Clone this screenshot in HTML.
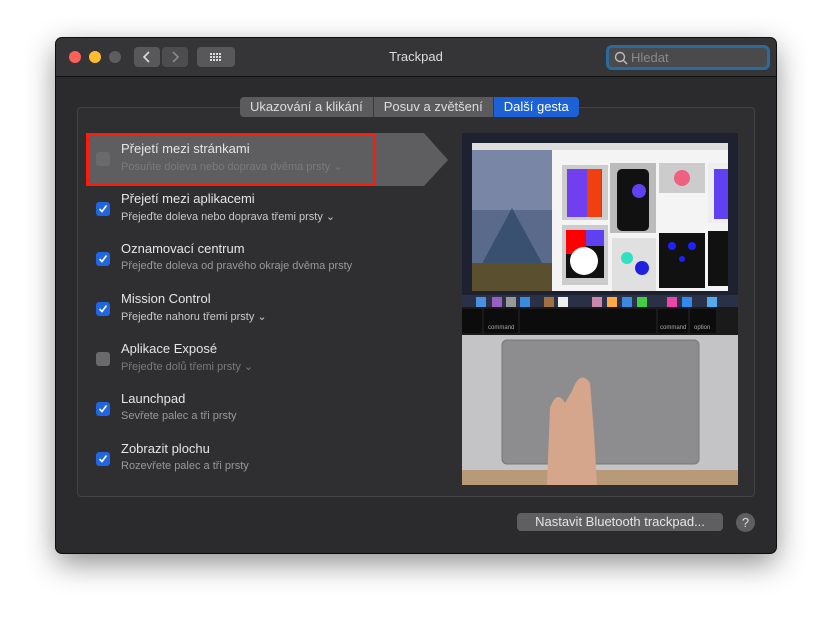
<!DOCTYPE html>
<html><head><meta charset="utf-8"><style>
*{margin:0;padding:0;box-sizing:border-box}
body{width:832px;height:627px;background:#fff;font-family:"Liberation Sans",sans-serif;position:relative;overflow:hidden}
.win{position:absolute;left:56px;top:38px;width:720px;height:515px;background:#2b2b2d;border-radius:6px;box-shadow:0 10px 30px rgba(0,0,0,.45),0 0 0 1px #111;overflow:hidden}
.tb{position:absolute;left:0;top:0;width:720px;height:39px;background:#353537;border-bottom:1px solid #111}
.dot{position:absolute;top:13px;width:12px;height:12px;border-radius:50%}
.btn{position:absolute;top:9px;height:20px;background:#58585a;border-radius:4px}
.title{position:absolute;left:0;width:720px;top:11px;text-align:center;color:#ddd;font-size:13px}
.search{position:absolute;left:550px;top:7px;width:164px;height:25px;border:3px solid #2a6a9e;border-radius:6px;background:#4a4a4c;color:#8a8a8a;font-size:13px;padding:2px 0 0 22px}
.panel{position:absolute;left:21px;top:69px;width:678px;height:390px;border:1px solid #444;border-radius:4px;background:#2f2f31}
.tabs{position:absolute;left:184px;top:59px;height:20px;display:flex;border-radius:4px;overflow:hidden;font-size:13px;color:#ddd}
.tabs div{background:#5b5b5d;padding:2px 10px 0;height:20px;border-right:1px solid #3a3a3c}
.tabs .a{background:#1c62d6;color:#fff;border:0}
.row{position:absolute;left:40px;width:320px;height:50px}
.cb{position:absolute;left:0;top:19px;width:14px;height:14px;border-radius:3px;background:#1f66e0}
.cb svg{position:absolute;left:2px;top:2px}
.cb.off{background:#6a6a6c}
.t{position:absolute;left:25px;top:8px;color:#e6e6e6;font-size:13px}
.s{position:absolute;left:25px;top:27px;color:#c8c8c8;font-size:11px}
.row.dim .s{color:#7a7a7a}
</style></head><body>
<div class="win">
 <div class="tb">
  <div class="dot" style="left:13px;background:#fe5f57"></div>
  <div class="dot" style="left:33px;background:#febc2e"></div>
  <div class="dot" style="left:53px;background:#5d5d5f"></div>
  <div class="btn" style="left:78px;width:26px"><svg width="26" height="20"><path d="M15 5l-5 5 5 5" stroke="#ddd" stroke-width="1.6" fill="none"/></svg></div>
  <div class="btn" style="left:106px;width:26px;background:#4d4d4f"><svg width="26" height="20"><path d="M11 5l5 5-5 5" stroke="#888" stroke-width="1.6" fill="none"/></svg></div>
  <div class="btn" style="left:141px;width:38px"><svg width="38" height="20"><g fill="#ddd"><rect x="13" y="6" width="2" height="2"/><rect x="16" y="6" width="2" height="2"/><rect x="19" y="6" width="2" height="2"/><rect x="22" y="6" width="2" height="2"/><rect x="13" y="9" width="2" height="2"/><rect x="16" y="9" width="2" height="2"/><rect x="19" y="9" width="2" height="2"/><rect x="22" y="9" width="2" height="2"/><rect x="13" y="12" width="2" height="2"/><rect x="16" y="12" width="2" height="2"/><rect x="19" y="12" width="2" height="2"/><rect x="22" y="12" width="2" height="2"/></g></svg></div>
  <div class="title">Trackpad</div>
  <div class="search"><svg style="position:absolute;left:5px;top:3px" width="14" height="14"><circle cx="6" cy="6" r="4.5" stroke="#bbb" stroke-width="1.4" fill="none"/><path d="M9 9l4 4" stroke="#bbb" stroke-width="1.5"/></svg>Hledat</div>
 </div>
 <div class="panel"></div>
 <div class="tabs"><div>Ukazování a klikání</div><div>Posuv a zvětšení</div><div class="a">Další gesta</div></div>
 <svg style="position:absolute;left:30px;top:95px" width="400" height="54"><path d="M0 0H338L362 27 338 53H0Z" fill="#5e5e60"/><rect x="1.5" y="1.5" width="287" height="50" fill="none" stroke="#ff1a0a" stroke-width="3"/></svg>
 <div class="row dim" style="top:95px"><div class="cb off"></div><div class="t">Přejetí mezi stránkami</div><div class="s">Posuňte doleva nebo doprava dvěma prsty ⌄</div></div>
 <div class="row" style="top:145px"><div class="cb"><svg width="10" height="10"><path d="M1.5 5l2.5 2.5 4.5-6" stroke="#fff" stroke-width="1.6" fill="none"/></svg></div><div class="t">Přejetí mezi aplikacemi</div><div class="s">Přejeďte doleva nebo doprava třemi prsty ⌄</div></div>
 <div class="row" style="top:195px"><div class="cb"><svg width="10" height="10"><path d="M1.5 5l2.5 2.5 4.5-6" stroke="#fff" stroke-width="1.6" fill="none"/></svg></div><div class="t">Oznamovací centrum</div><div class="s" style="color:#999">Přejeďte doleva od pravého okraje dvěma prsty</div></div>
 <div class="row" style="top:245px"><div class="cb"><svg width="10" height="10"><path d="M1.5 5l2.5 2.5 4.5-6" stroke="#fff" stroke-width="1.6" fill="none"/></svg></div><div class="t">Mission Control</div><div class="s">Přejeďte nahoru třemi prsty ⌄</div></div>
 <div class="row dim" style="top:295px"><div class="cb off"></div><div class="t">Aplikace Exposé</div><div class="s">Přejeďte dolů třemi prsty ⌄</div></div>
 <div class="row" style="top:345px"><div class="cb"><svg width="10" height="10"><path d="M1.5 5l2.5 2.5 4.5-6" stroke="#fff" stroke-width="1.6" fill="none"/></svg></div><div class="t">Launchpad</div><div class="s" style="color:#999">Sevřete palec a tři prsty</div></div>
 <div class="row" style="top:395px"><div class="cb"><svg width="10" height="10"><path d="M1.5 5l2.5 2.5 4.5-6" stroke="#fff" stroke-width="1.6" fill="none"/></svg></div><div class="t">Zobrazit plochu</div><div class="s" style="color:#999">Rozevřete palec a tři prsty</div></div>
 <svg style="position:absolute;left:406px;top:95px" width="276" height="352">
  <rect width="276" height="352" fill="#bdbdbf"/>
  <rect width="276" height="172" fill="#1e2230"/>
  <rect x="10" y="10" width="256" height="148" fill="#ddd"/>
  <rect x="10" y="17" width="80" height="141" fill="#5a6a8a"/>
  <rect x="10" y="17" width="80" height="60" fill="#7a86a6"/>
  <path d="M15 140L50 75 80 130Z" fill="#3a5070"/>
  <rect x="10" y="130" width="80" height="28" fill="#5a5030"/>
  <rect x="90" y="17" width="176" height="141" fill="#f4f4f4"/>
  <rect x="100" y="32" width="46" height="55" fill="#ccc"/><rect x="105" y="36" width="35" height="48" fill="#7040f0"/><rect x="125" y="36" width="14" height="48" fill="#f04010"/>
  <rect x="148" y="30" width="46" height="70" fill="#bbb"/><rect x="155" y="36" width="32" height="62" rx="5" fill="#111"/><circle cx="177" cy="58" r="7" fill="#6040f0"/>
  <rect x="197" y="30" width="46" height="30" fill="#ccc"/><circle cx="220" cy="45" r="8" fill="#f06080"/>
  <rect x="246" y="30" width="20" height="60" fill="#eee"/><rect x="252" y="36" width="14" height="50" fill="#6040f0"/>
  <rect x="100" y="92" width="46" height="60" fill="#ccc"/><rect x="104" y="97" width="38" height="48" fill="#111"/><rect x="104" y="97" width="20" height="24" fill="#f00"/><rect x="124" y="97" width="18" height="16" fill="#6040f0"/><circle cx="122" cy="128" r="14" fill="#fff"/>
  <rect x="150" y="105" width="44" height="53" fill="#e0e0e0"/><circle cx="165" cy="125" r="6" fill="#30e0c0"/><circle cx="180" cy="135" r="7" fill="#2020e0"/>
  <rect x="197" y="100" width="46" height="55" fill="#111"/><circle cx="210" cy="113" r="4" fill="#2020ff"/><circle cx="230" cy="113" r="4" fill="#2020ff"/><circle cx="220" cy="126" r="3" fill="#2020ff"/>
  <rect x="246" y="98" width="20" height="55" fill="#111"/>
  <rect x="0" y="162" width="276" height="16" fill="#2a3045"/>
  <g><rect x="14" y="164" width="10" height="10" fill="#4a90e0"/><rect x="30" y="164" width="10" height="10" fill="#9a60c0"/><rect x="44" y="164" width="10" height="10" fill="#999"/><rect x="58" y="164" width="10" height="10" fill="#3a8ae0"/><rect x="82" y="164" width="10" height="10" fill="#a07040"/><rect x="96" y="164" width="10" height="10" fill="#eee"/><rect x="130" y="164" width="10" height="10" fill="#c8a"/><rect x="145" y="164" width="10" height="10" fill="#fa4"/><rect x="160" y="164" width="10" height="10" fill="#3a8ae0"/><rect x="175" y="164" width="10" height="10" fill="#4c4"/><rect x="205" y="164" width="10" height="10" fill="#e4a"/><rect x="220" y="164" width="10" height="10" fill="#38e"/><rect x="245" y="164" width="10" height="10" fill="#5ae"/></g>
  <rect x="0" y="174" width="276" height="28" fill="#1a1a1a"/>
  <rect x="22" y="176" width="34" height="24" rx="2" fill="#0c0c0c"/><rect x="58" y="176" width="136" height="24" rx="2" fill="#0c0c0c"/><rect x="196" y="176" width="30" height="24" rx="2" fill="#0c0c0c"/><rect x="228" y="176" width="26" height="24" rx="2" fill="#0c0c0c"/><rect x="0" y="176" width="20" height="24" rx="2" fill="#0c0c0c"/>
  <text x="26" y="196" font-size="6" fill="#aaa" font-family="Liberation Sans">command</text>
  <text x="198" y="196" font-size="6" fill="#aaa" font-family="Liberation Sans">command</text>
  <text x="232" y="196" font-size="6" fill="#aaa" font-family="Liberation Sans">option</text>
  <rect x="0" y="202" width="276" height="150" fill="#c4c4c6"/>
  <rect x="40" y="207" width="197" height="124" rx="5" fill="#8d8d8f" stroke="#777"/>
  <rect x="0" y="337" width="276" height="15" fill="#b89a78"/>
  <path d="M85 352L88 275Q95 256 103 270L110 258Q118 236 128 250L132 300 135 352Z" fill="#d6a68c"/>
 </svg>
 <div style="position:absolute;left:461px;top:475px;width:206px;height:18px;background:#5f5f61;border-radius:4px;color:#e6e6e6;font-size:13px;text-align:center;padding-top:1px">Nastavit Bluetooth trackpad...</div>
 <div style="position:absolute;left:680px;top:475px;width:19px;height:19px;border-radius:50%;background:#5f5f61;color:#ddd;font-size:13px;text-align:center;line-height:19px">?</div>
</div>
</body></html>
